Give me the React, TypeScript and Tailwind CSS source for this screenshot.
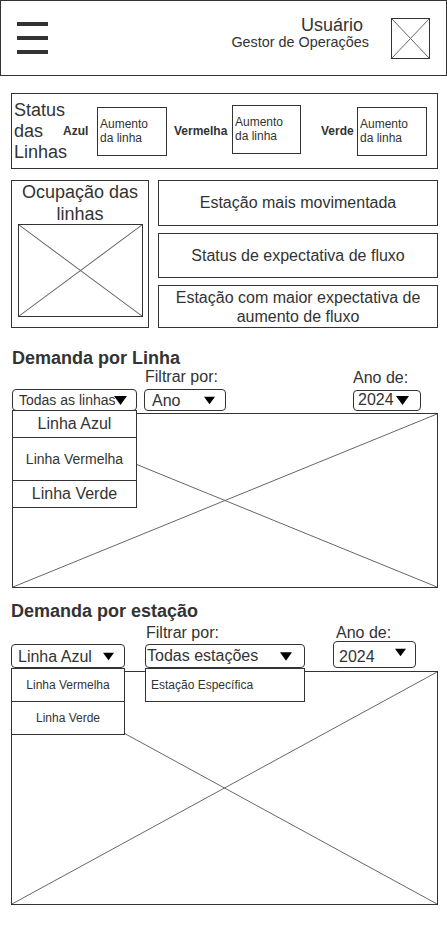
import React from "react"

function Cross() {
  return (
    <svg className="block h-full w-full" viewBox="0 0 100 100" preserveAspectRatio="none">
      <line x1="0" y1="0" x2="100" y2="100" stroke="#666" strokeWidth="1" vectorEffect="non-scaling-stroke" />
      <line x1="100" y1="0" x2="0" y2="100" stroke="#666" strokeWidth="1" vectorEffect="non-scaling-stroke" />
    </svg>
  )
}

function Caret({ className = "" }: { className?: string }) {
  return (
    <svg width="13" height="9" viewBox="0 0 13 9" className={"shrink-0 " + className}>
      <path d="M0 0H13L6.5 9Z" fill="#000" />
    </svg>
  )
}

function Aumento({ className = "" }: { className?: string }) {
  return (
    <div className={"flex h-[49px] shrink-0 items-center border border-[#333] pl-[2px] text-[12px] leading-[14px] " + className}>
      Aumento
      <br />
      da linha
    </div>
  )
}

export default function App() {
  return (
    <div
      className="min-h-[926px] w-[447px] bg-white text-[#333]"
      style={{ fontFamily: '"Liberation Sans", Arial, sans-serif' }}
    >
      {/* header */}
      <header className="flex h-[76px] w-[447px] items-start border border-[#333]">
        <div className="ml-[16px] mt-[21px] flex flex-col gap-[10px]">
          <span className="block h-[4px] w-[31px] bg-[#333]" />
          <span className="block h-[4px] w-[31px] bg-[#333]" />
          <span className="block h-[4px] w-[31px] bg-[#333]" />
        </div>
        <div className="ml-auto mt-[14px] flex flex-col items-end">
          <span className="mr-[6px] text-[18px] leading-[20px]">Usuário</span>
          <span className="text-[14.4px] leading-[15px]">Gestor de Operações</span>
        </div>
        <div className="ml-[22px] mr-[16px] mt-[17px] h-[41px] w-[39px] border border-[#333]">
          <Cross />
        </div>
      </header>

      {/* status das linhas */}
      <div className="ml-[11px] mt-[17px] flex h-[76px] w-[427px] items-center border border-[#333]">
        <div className="ml-[2px] w-[49px] whitespace-nowrap text-[18px] leading-[21px]">
          Status
          <br />
          das
          <br />
          Linhas
        </div>
        <span className="w-[26px] text-[12px] font-bold">Azul</span>
        <Aumento className="ml-[8px] w-[70px]" />
        <span className="ml-[7px] w-[54px] text-[12px] font-bold">Vermelha</span>
        <Aumento className="mb-[4px] ml-[4px] w-[69px]" />
        <span className="ml-[20px] w-[33px] text-[12px] font-bold">Verde</span>
        <Aumento className="ml-[3px] w-[70px]" />
      </div>

      {/* ocupação + indicadores */}
      <div className="ml-[11px] mt-[11px] flex gap-[9px]">
        <div className="flex h-[148px] w-[138px] flex-col border border-[#333]">
          <p className="text-center text-[18px] leading-[22px]">
            Ocupação das
            <br />
            linhas
          </p>
          <div className="-mt-[1px] ml-[6px] h-[93px] w-[125px] border border-[#333]">
            <Cross />
          </div>
        </div>
        <div className="flex w-[280px] flex-col gap-[7px]">
          <div className="flex h-[46px] items-center justify-center border border-[#333] text-[16px]">
            Estação mais movimentada
          </div>
          <div className="flex h-[45px] items-center justify-center border border-[#333] text-[16px]">
            Status de expectativa de fluxo
          </div>
          <div className="flex h-[43px] items-center justify-center border border-[#333] text-center text-[16px] leading-[19px]">
            Estação com maior expectativa de
            <br />
            aumento de fluxo
          </div>
        </div>
      </div>

      {/* demanda por linha */}
      <h2 className="ml-[12px] mt-[20px] text-[18px] font-bold leading-[20px]">Demanda por Linha</h2>
      <div className="relative mt-[1px]">
        <div className="flex items-end">
          <div className="ml-[12px] flex h-[22px] w-[125px] items-center rounded-[4px] border border-[#333] pl-[6px] text-[14px]">
            <span className="whitespace-nowrap">Todas as linhas</span>
            <Caret className="-ml-[2px]" />
          </div>
          <div className="ml-[7px] flex flex-col">
            <span className="mb-[4px] pl-[1px] text-[16px] leading-[16px]">Filtrar por:</span>
            <div className="flex h-[22px] w-[82px] items-center justify-between rounded-[4px] border border-[#333] pl-[7px] pr-[10px] text-[16px]">
              <span className="pt-[2px]">Ano</span>
              <Caret className="w-[11px]" />
            </div>
          </div>
          <div className="ml-[127px] flex flex-col">
            <span className="mb-[4px] text-[16px] leading-[16px]">Ano de:</span>
            <div className="flex h-[21px] w-[68px] items-center rounded-[4px] border border-[#333] pl-[4px] text-[16px]">
              <span className="-mt-[2px]">2024</span>
              <Caret className="ml-[2px]" />
            </div>
          </div>
        </div>
        <div className="ml-[12px] mt-[2px] h-[175px] w-[426px] border border-[#333]">
          <Cross />
        </div>
        <ul className="absolute left-[12px] top-[41px] w-[125px] border border-[#333] bg-white text-center">
          <li className="flex h-[26px] items-center justify-center text-[16px]">Linha Azul</li>
          <li className="flex h-[43px] items-center justify-center border-t border-[#333] text-[14px]">Linha Vermelha</li>
          <li className="flex h-[27px] items-center justify-center border-t border-[#333] text-[16px]">Linha Verde</li>
        </ul>
      </div>

      {/* demanda por estação */}
      <h2 className="ml-[11px] mt-[13px] text-[18px] font-bold leading-[20px]">Demanda por estação</h2>
      <div className="relative mt-[4px]">
        <div className="flex items-end">
          <div className="ml-[11px] flex h-[24px] w-[114px] items-center justify-between rounded-[4px] border border-[#333] pl-[6px] pr-[10px] text-[16px]">
            <span className="pt-[2px]">Linha Azul</span>
            <Caret className="w-[11px]" />
          </div>
          <div className="ml-[20px] flex flex-col">
            <span className="mb-[3px] pl-[1px] text-[16px] leading-[16px]">Filtrar por:</span>
            <div className="flex h-[24px] w-[160px] items-center justify-between rounded-[4px] border border-[#333] pl-[1px] pr-[12px] text-[16px]">
              <span>Todas estações</span>
              <Caret className="w-[12px]" />
            </div>
          </div>
          <div className="ml-[28px] flex flex-col">
            <span className="ml-[3px] text-[16px] leading-[16px]">Ano de:</span>
            <div className="flex h-[27px] w-[83px] items-center justify-between rounded-[4px] border border-[#333] pl-[5px] pr-[9px] text-[16px]">
              <span className="pt-[4px]">2024</span>
              <Caret className="-mt-[4px] w-[11px]" />
            </div>
          </div>
        </div>
        <div className="ml-[11px] mt-[3px] h-[234px] w-[427px] border border-[#333]">
          <Cross />
        </div>
        <ul className="absolute left-[11px] top-[43px] w-[114px] border border-[#333] bg-white text-center text-[12px]">
          <li className="flex h-[32px] items-center justify-center">Linha Vermelha</li>
          <li className="flex h-[33px] items-center justify-center border-t border-[#333]">Linha Verde</li>
        </ul>
        <div className="absolute left-[145px] top-[43px] flex h-[34px] w-[160px] items-center border border-[#333] bg-white pl-[5px] text-[12px]">
          Estação Específica
        </div>
      </div>
    </div>
  )
}
